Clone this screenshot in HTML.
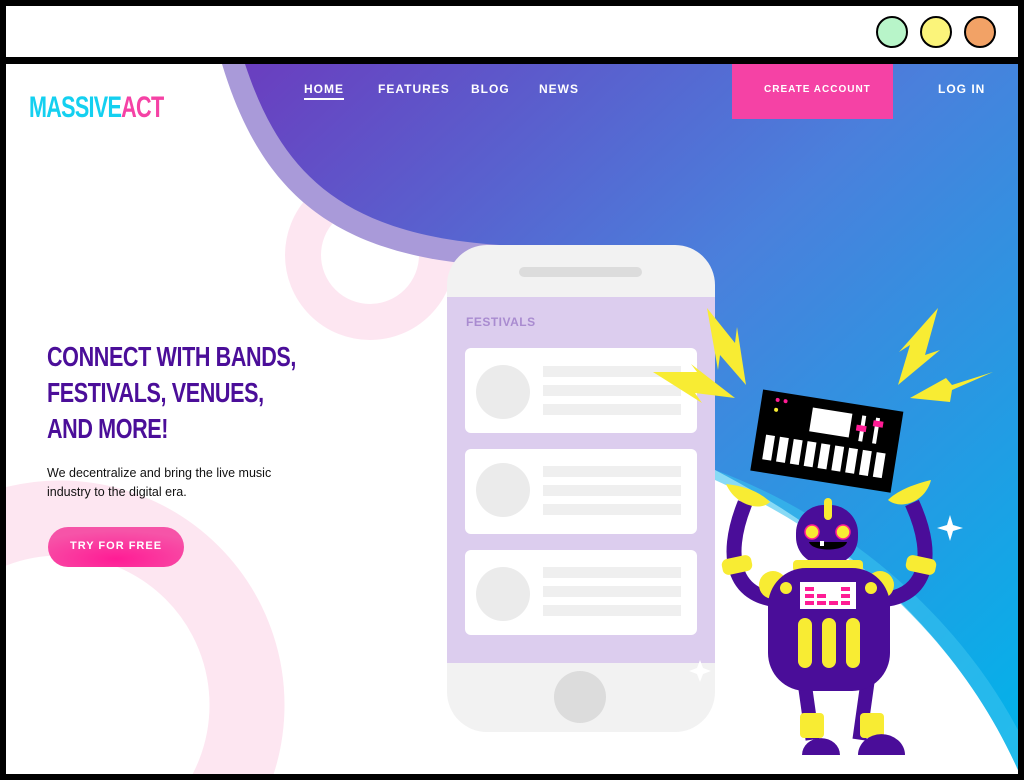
<!DOCTYPE html>
<html><head><meta charset="utf-8"><style>
*{margin:0;padding:0;box-sizing:border-box}
html,body{width:1024px;height:780px;overflow:hidden}
body{background:#000;position:relative;font-family:"Liberation Sans",sans-serif}
.abs{position:absolute}
.top{left:6px;top:6px;width:1012px;height:51px;background:#fff}
.dot{position:absolute;top:10px;width:32px;height:32px;border-radius:50%;border:2px solid #000}
.main{left:6px;top:64px;width:1012px;height:710px;background:#fff;overflow:hidden}
.nav{position:absolute;color:#fff;font-size:12px;letter-spacing:1px;top:18px;font-weight:bold}
.h1{position:absolute;left:41px;font-weight:bold;color:#4b0e99;font-size:28px;letter-spacing:-0.5px;line-height:36px;top:275px;white-space:nowrap;transform:scaleX(0.77);transform-origin:left top}
</style></head><body>
<div class="abs top">
<div class="dot" style="left:870px;background:#b8f5c9"></div>
<div class="dot" style="left:914px;background:#fbf47a"></div>
<div class="dot" style="left:958px;background:#f2a266"></div>
</div>
<div class="abs main">
<svg width="1012" height="710" viewBox="6 64 1012 710" style="position:absolute;left:0;top:0">
<defs>
<linearGradient id="g" x1="0" y1="0" x2="1" y2="1">
<stop offset="0" stop-color="#6a3ebf"/><stop offset="0.45" stop-color="#4a80dc"/><stop offset="1" stop-color="#00b4ea"/>
</linearGradient>
<radialGradient id="btn" cx="0.5" cy="0.8" r="0.7"><stop offset="0" stop-color="#ff1c95"/><stop offset="1" stop-color="#f654a8"/></radialGradient>
</defs>
<circle cx="370" cy="255" r="67" fill="none" stroke="#fde6f1" stroke-width="36"/>
<circle cx="60" cy="705" r="187" fill="none" stroke="#fde6f1" stroke-width="75"/>
<path d="M222 64 C260 190 330 250 470 264 L560 272 L560 64Z" fill="#a99ad9"/>
<path d="M245 64 C280 170 340 235 500 245 C560 250 600 262 640 280 L715 300 L715 470 C850 540 960 640 1018 770 L1018 64Z" fill="url(#g)"/>
<path d="M715 470 C850 520 960 620 1018 730 L1018 770 C960 640 850 540 715 480Z" fill="#39c2ee" opacity="0.6"/>
<rect x="447" y="245" width="268" height="487" rx="40" fill="#f2f2f2"/>
<rect x="447" y="297" width="268" height="366" fill="#dccdee"/>
<rect x="519" y="267" width="123" height="10" rx="5" fill="#dcdcdc"/>
<circle cx="580" cy="697" r="26" fill="#dcdcdc"/>
<g fill="#fff"><rect x="465" y="348" width="232" height="85" rx="6"/><rect x="465" y="449" width="232" height="85" rx="6"/><rect x="465" y="550" width="232" height="85" rx="6"/></g>
<g fill="#ebebeb"><circle cx="503" cy="392" r="27"/><circle cx="503" cy="490" r="27"/><circle cx="503" cy="594" r="27"/></g>
<g fill="#efefef">
<rect x="543" y="366" width="138" height="11"/><rect x="543" y="385" width="138" height="11"/><rect x="543" y="404" width="138" height="11"/>
<rect x="543" y="466" width="138" height="11"/><rect x="543" y="485" width="138" height="11"/><rect x="543" y="504" width="138" height="11"/>
<rect x="543" y="567" width="138" height="11"/><rect x="543" y="586" width="138" height="11"/><rect x="543" y="605" width="138" height="11"/></g>
<text x="466" y="326" font-size="12" font-weight="bold" fill="#a98bd0" letter-spacing="0.5" font-family="Liberation Sans">FESTIVALS</text>
<g fill="#f8ec33">
<path d="M707 308 L735 343 L737 327 L746 385 L720 355 L718 370Z"/>
<path d="M653 372 L697 372 L691 364 L735 398 L695 393 L702 403Z"/>
<path d="M938 308 L925 355 L940 350 L898 385 L910 345 L899 352Z"/>
<path d="M993 372 L952 390 L950 402 L910 398 L946 378 L952 385Z"/>
</g>
<g transform="rotate(9 826 440)">
<rect x="756" y="400" width="142" height="82" fill="#000"/>
<rect x="808" y="410" width="40" height="24" fill="#fff"/>
<g fill="#fff"><rect x="766" y="444" width="9" height="25"/><rect x="780" y="444" width="9" height="25"/><rect x="794" y="444" width="9" height="25"/><rect x="808" y="444" width="9" height="25"/><rect x="822" y="444" width="9" height="25"/><rect x="836" y="444" width="9" height="25"/><rect x="850" y="444" width="9" height="25"/><rect x="864" y="444" width="9" height="25"/><rect x="878" y="444" width="9" height="25"/>
<rect x="858" y="410" width="4" height="26"/><rect x="872" y="410" width="4" height="26"/></g>
<rect x="854" y="420" width="10" height="6" fill="#ff1c95"/><rect x="870" y="413" width="10" height="6" fill="#ff1c95"/>
<circle cx="772" cy="408" r="2" fill="#ff1c95"/><circle cx="780" cy="408" r="2" fill="#ff1c95"/><circle cx="772" cy="418" r="2" fill="#f8ec33"/>
</g>
<g>
<path d="M785 600 C735 600 722 560 745 503" fill="none" stroke="#4a0d99" stroke-width="15"/>
<path d="M875 600 C925 600 938 560 912 503" fill="none" stroke="#4a0d99" stroke-width="15"/>
<path d="M726 484 C735 505 760 512 770 502 C760 492 745 486 726 484Z" fill="#f8ec33"/>
<path d="M931 480 C925 503 900 510 888 500 C898 490 915 484 931 480Z" fill="#f8ec33"/>
<rect x="722" y="557" width="30" height="16" rx="6" fill="#f8ec33" transform="rotate(-12 737 565)"/>
<rect x="906" y="557" width="30" height="16" rx="6" fill="#f8ec33" transform="rotate(12 921 565)"/>
<rect x="800" y="680" width="14" height="60" fill="#4a0d99" transform="rotate(-8 807 700)"/>
<rect x="858" y="680" width="14" height="60" fill="#4a0d99" transform="rotate(8 865 700)"/>
<rect x="800" y="713" width="24" height="25" rx="4" fill="#f8ec33"/>
<rect x="860" y="713" width="24" height="25" rx="4" fill="#f8ec33"/>
<path d="M802 755 A18 16 0 0 1 840 755Z" fill="#4a0d99"/>
<path d="M858 755 A18 16 0 0 1 905 755Z" fill="#4a0d99"/>
<rect x="796" y="505" width="62" height="60" rx="28" fill="#4a0d99"/>
<rect x="824" y="498" width="8" height="22" rx="4" fill="#f8ec33"/>
<circle cx="812" cy="532" r="7" fill="#f8ec33" stroke="#ff1c95" stroke-width="1.5"/>
<circle cx="843" cy="532" r="7" fill="#f8ec33" stroke="#ff1c95" stroke-width="1.5"/>
<path d="M809 542 L847 542 C845 552 812 552 809 542Z" fill="#000"/>
<rect x="820" y="541" width="4" height="5" fill="#fff"/>
<rect x="793" y="560" width="70" height="12" rx="4" fill="#f8ec33"/>
<circle cx="773" cy="585" r="14" fill="#f8ec33"/><circle cx="880" cy="585" r="14" fill="#f8ec33"/>
<rect x="768" y="568" width="122" height="123" rx="38" fill="#4a0d99"/>
<circle cx="786" cy="588" r="6" fill="#f8ec33"/><circle cx="871" cy="588" r="6" fill="#f8ec33"/>
<rect x="800" y="582" width="56" height="27" fill="#fff"/>
<g fill="#ff1c95"><rect x="805" y="587" width="9" height="4"/><rect x="805" y="594" width="9" height="4"/><rect x="805" y="601" width="9" height="4"/><rect x="817" y="594" width="9" height="4"/><rect x="817" y="601" width="9" height="4"/><rect x="829" y="601" width="9" height="4"/><rect x="841" y="587" width="9" height="4"/><rect x="841" y="594" width="9" height="4"/><rect x="841" y="601" width="9" height="4"/></g>
<rect x="798" y="618" width="14" height="50" rx="7" fill="#f8ec33"/><rect x="822" y="618" width="14" height="50" rx="7" fill="#f8ec33"/><rect x="846" y="618" width="14" height="50" rx="7" fill="#f8ec33"/>
</g>
<g fill="#fff"><path d="M950 515 l3 10 10 3 -10 3 -3 10 -3 -10 -10 -3 10 -3Z"/><path d="M763 528 l2 6 6 2 -6 2 -2 6 -2 -6 -6 -2 6 -2Z"/><path d="M700 660 l3 8 8 3 -8 3 -3 8 -3 -8 -8 -3 8 -3Z"/><path d="M718 740 l2 6 6 2 -6 2 -2 6 -2 -6 -6 -2 6 -2Z" opacity="0.8"/></g>
<rect x="48" y="527" width="136" height="40" rx="20" fill="url(#btn)"/>
<rect x="732" y="64" width="161" height="55" fill="#f542a5"/>
</svg>
<div style="position:absolute;left:23px;top:27px;font-weight:bold;font-size:30px;letter-spacing:-1px;white-space:nowrap;transform:scaleX(0.72);transform-origin:left top"><span style="color:#14d0f0">MASSIVE</span><span style="color:#f542a5">ACT</span></div>
<div class="nav" style="left:298px;border-bottom:2px solid #fff;padding-bottom:2px">HOME</div>
<div class="nav" style="left:372px">FEATURES</div>
<div class="nav" style="left:465px">BLOG</div>
<div class="nav" style="left:533px">NEWS</div>
<div class="nav" style="left:758px;font-size:10px;top:20px">CREATE ACCOUNT</div>
<div class="nav" style="left:932px">LOG IN</div>
<div class="h1">CONNECT WITH BANDS,<br>FESTIVALS, VENUES,<br>AND MORE!</div>
<div style="position:absolute;left:41px;top:400px;font-size:12.5px;line-height:19px;color:#111">We decentralize and bring the live music<br>industry to the digital era.</div>
<div style="position:absolute;left:42px;top:476px;width:136px;text-align:center;color:#fff;font-size:11px;letter-spacing:1px;font-weight:bold">TRY FOR FREE</div>
</div>
</body></html>
